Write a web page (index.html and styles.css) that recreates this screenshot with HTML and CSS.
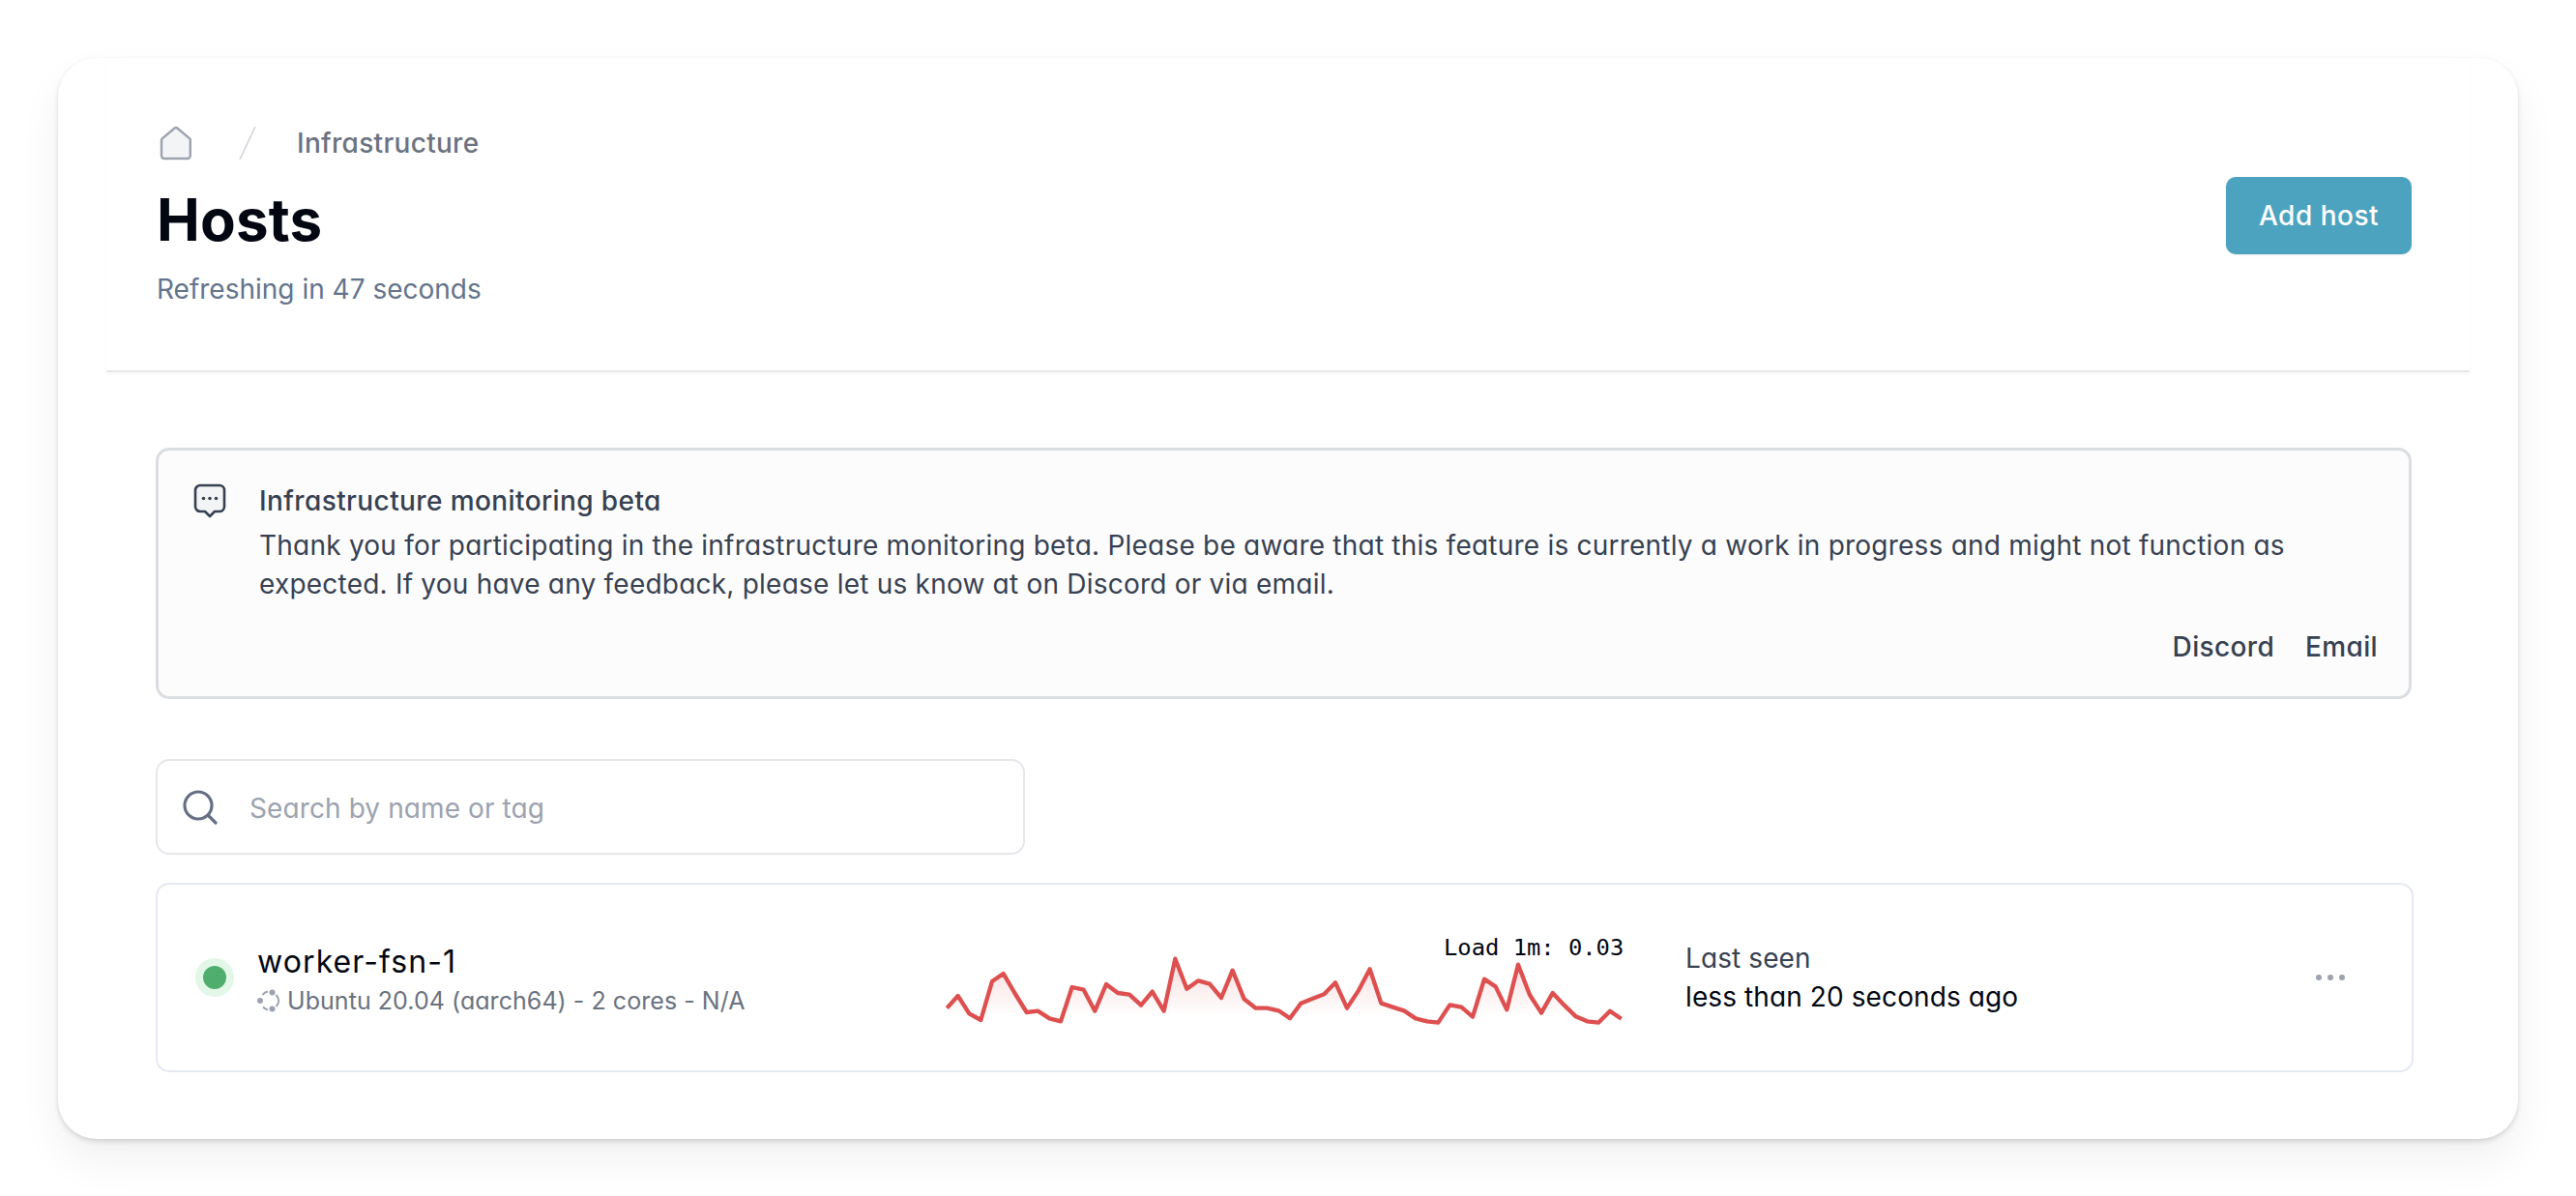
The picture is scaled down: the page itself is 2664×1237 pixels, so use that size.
FILE: index.html
```html
<!DOCTYPE html>
<html lang="en">
<head>
<meta charset="utf-8">
<title>Hosts</title>
<link rel="stylesheet" href="styles.css">
</head>
<body>
<main class="card">
  <header class="header">
    <div class="heading">
      <nav class="crumbs">
        <svg class="home" width="34" height="36" viewBox="0 0 34 36"><path d="M3 13.2 15.6 2.5a2 2 0 0 1 2.7 0L31 13.2a2 2 0 0 1 .8 1.6V31a3 3 0 0 1-3 3H5a3 3 0 0 1-3-3V14.8a2 2 0 0 1 1-1.6Z" fill="#F3F4F6" stroke="#9CA3AF" stroke-width="2.4" stroke-linejoin="round"/></svg>
        <svg class="slash" width="18" height="36" viewBox="0 0 18 36"><path d="M17 1 1 35" stroke="#D1D5DB" stroke-width="1.6" fill="none"/></svg>
        <span class="crumb">Infrastructure</span>
      </nav>
      <h1 class="title">Hosts</h1>
      <p class="subtitle">Refreshing in 47 seconds</p>
    </div>
    <button class="primary">Add host</button>
  </header>
  <section class="content">
    <div class="alert">
      <svg class="alert-icon" width="34" height="36" viewBox="0 0 34 36"><path d="M7 2h20a5 5 0 0 1 5 5v17a5 5 0 0 1-5 5h-5l-5 5-5-5H7a5 5 0 0 1-5-5V7a5 5 0 0 1 5-5Z" fill="#F3F4F6" stroke="#374151" stroke-width="2.6" stroke-linejoin="round"/><circle cx="10.5" cy="15.5" r="1.8" fill="#374151"/><circle cx="17" cy="15.5" r="1.8" fill="#374151"/><circle cx="23.5" cy="15.5" r="1.8" fill="#374151"/></svg>
      <div class="alert-body">
        <h2 class="alert-title">Infrastructure monitoring beta</h2>
        <p class="alert-text">Thank you for participating in the infrastructure monitoring beta. Please be aware that this feature is currently a work in progress and might not function as expected. If you have any feedback, please let us know at on Discord or via email.</p>
        <div class="alert-actions"><a class="action">Discord</a><a class="action">Email</a></div>
      </div>
    </div>
    <div class="search">
      <svg class="search-icon" width="36" height="36" viewBox="0 0 36 36"><circle cx="16" cy="16" r="14" fill="none" stroke="#667085" stroke-width="3.2"/><path d="m27 27 7 7" stroke="#667085" stroke-width="3.2" stroke-linecap="round"/></svg>
      <span class="placeholder">Search by name or tag</span>
    </div>
    <article class="host">
      <span class="status"><span class="status-dot"></span></span>
      <div class="host-info">
        <div class="host-name">worker-fsn-1</div>
        <div class="host-meta">
          <svg class="os" width="24" height="24" viewBox="0 0 24 24"><g fill="none" stroke="#9CA3AF" stroke-width="2"><path d="M5.5 6A9.5 9.5 0 0 1 11 2.6"/><path d="M19.5 6a10 10 0 0 1 2.8 6 10 10 0 0 1-2.8 6"/><path d="M6 18.5A10 10 0 0 0 11 21.5"/></g><circle cx="15.5" cy="3.5" r="3" fill="#9CA3AF"/><circle cx="3" cy="12" r="3" fill="#9CA3AF"/><circle cx="15.5" cy="20.5" r="3" fill="#9CA3AF"/></svg>
          <span>Ubuntu 20.04 (aarch64) - 2 cores - N/A</span>
        </div>
      </div>
      <div class="chart">
        <svg width="734" height="140" viewBox="0 0 2202 420">
          <defs><linearGradient id="area" x1="0" y1="150" x2="0" y2="332" gradientUnits="userSpaceOnUse"><stop offset="0" stop-color="#DC4E4E" stop-opacity=".2"/><stop offset="1" stop-color="#DC4E4E" stop-opacity="0"/></linearGradient></defs>
          <path fill="url(#area)" d="M58 305 92 267 127 322 163 342 198 222 233 198 268 258 305 318 340 314 376 337 411 346 446 240 482 248 517 314 552 231 588 258 624 263 660 296 695 254 731 314 766 152 802 245 838 220 873 230 909 273 944 188 980 277 1016 305 1051 305 1087 313 1122 337 1156 290 1193 275 1228 262 1263 226 1299 305 1335 250 1370 184 1405 290 1441 302 1476 313 1512 337 1547 346 1582 350 1618 295 1654 302 1689 332 1725 215 1760 238 1795 310 1830 170 1866 264 1902 320 1937 258 1973 296 2009 331 2044 346 2079 350 2115 314 2150 338V350H58Z"/>
          <path fill="none" stroke="#DE4F4F" stroke-width="13" stroke-linejoin="round" d="M58 305 92 267 127 322 163 342 198 222 233 198 268 258 305 318 340 314 376 337 411 346 446 240 482 248 517 314 552 231 588 258 624 263 660 296 695 254 731 314 766 152 802 245 838 220 873 230 909 273 944 188 980 277 1016 305 1051 305 1087 313 1122 337 1156 290 1193 275 1228 262 1263 226 1299 305 1335 250 1370 184 1405 290 1441 302 1476 313 1512 337 1547 346 1582 350 1618 295 1654 302 1689 332 1725 215 1760 238 1795 310 1830 170 1866 264 1902 320 1937 258 1973 296 2009 331 2044 346 2079 350 2115 314 2150 338"/>
        </svg>
        <span class="load">Load 1m: 0.03</span>
      </div>
      <div class="seen">
        <div class="seen-label">Last seen</div>
        <div class="seen-value">less than 20 seconds ago</div>
      </div>
      <div class="more"><i></i><i></i><i></i></div>
    </article>
  </section>
</main>
</body>
</html>
```

FILE: styles.css
```css
* { box-sizing: border-box; }
html, body { margin: 0; padding: 0; background: #fff; }
body { font-family: Inter, "Noto Sans", sans-serif; font-feature-settings: "cv11"; color: #374151; height: 1237px; overflow: hidden; padding: 60px; }
h1, h2, p { margin: 0; }

.card { width: 2544px; height: 1118px; border-radius: 40px; background: #fff; box-shadow: 0 3px 6px -1px rgba(0,0,0,.16), 0 22px 44px rgba(0,0,0,.06), 0 0 5px rgba(0,0,0,.025); }

.header { margin: 0 50px; height: 325px; padding: 70px 60px 0 52px; display: flex; justify-content: space-between; align-items: flex-start; border-bottom: 2px solid #E7E8EB; box-shadow: 0 2px 3px rgba(0,0,0,.03); }
.crumbs { display: flex; align-items: center; height: 36px; margin-left: 3px; }
.home { margin-right: 48px; }
.slash { margin-right: 42px; }
.crumb { font-size: 28px; font-weight: 500; color: #6B7280; letter-spacing: .3px; }
.title { font-size: 60px; line-height: 80px; font-weight: 700; color: #030712; margin-top: 21px; letter-spacing: .2px; }
.subtitle { font-size: 28px; line-height: 40px; color: #64748B; margin-top: 12px; }
.primary { width: 192px; height: 80px; margin-top: 53px; border: 0; border-radius: 10px; background: #4BA3BF; color: #fff; font: 500 28px Inter, sans-serif; font-feature-settings: "cv11"; letter-spacing: .5px; padding: 0; box-shadow: 0 1px 2px rgba(0,0,0,.08); }

.content { padding: 78px 108px 0 101px; }
.alert { display: flex; height: 260px; margin-right: 2px; border: 3px solid #DADDE2; border-radius: 14px; background: #FCFCFD; padding: 32px 32px 0 36px; }
.alert-icon { flex: none; margin: 2px 34px 0 0; }
.alert-body { flex: 1; }
.alert-title { font-size: 28px; line-height: 40px; font-weight: 500; color: #374151; letter-spacing: .4px; }
.alert-text { font-size: 28px; line-height: 40px; margin-top: 6px; color: #374151; letter-spacing: .22px; }
.alert-actions { display: flex; justify-content: flex-end; gap: 32px; margin-top: 25px; }
.action { font-size: 28px; line-height: 40px; font-weight: 500; color: #374151; letter-spacing: .35px; }

.search { display: flex; align-items: center; width: 899px; height: 99px; margin-top: 62px; border: 2px solid #E5E7EB; border-radius: 14px; padding-left: 26px; }
.search-icon { flex: none; margin-right: 33px; }
.placeholder { font-size: 28px; color: #9CA3AF; letter-spacing: .1px; padding-top: 3px; }

.host { display: flex; align-items: center; height: 196px; margin-top: 29px; border: 2px solid #E5E9F0; border-radius: 14px; padding-left: 39px; }
.status { flex: none; display: flex; align-items: center; justify-content: center; width: 40px; height: 40px; border-radius: 50%; background: #E3F7E8; }
.status-dot { width: 24px; height: 24px; border-radius: 50%; background: #4FAE6D; }
.host-info { flex: none; width: 694px; margin-left: 24px; padding-top: 4px; }
.host-name { font-size: 32px; line-height: 42px; color: #030712; letter-spacing: 1.1px; }
.host-meta { display: flex; align-items: center; gap: 7px; font-size: 25px; line-height: 34px; color: #6B7280; margin-top: 2px; letter-spacing: .05px; }
.os { flex: none; }
.chart { position: relative; flex: none; width: 734px; height: 140px; }
.chart svg { display: block; }
.load { position: absolute; top: 25px; left: 533px; font: 23.8px "DejaVu Sans Mono", monospace; color: #030712; }
.seen { flex: none; width: 652px; margin-left: 49px; }
.seen-label { font-size: 28px; line-height: 40px; color: #374151; letter-spacing: .1px; }
.seen-value { font-size: 28px; line-height: 40px; color: #030712; letter-spacing: .1px; }
.more { display: flex; gap: 6px; }
.more i { width: 6px; height: 6px; border-radius: 50%; background: #9CA3AF; }
```
